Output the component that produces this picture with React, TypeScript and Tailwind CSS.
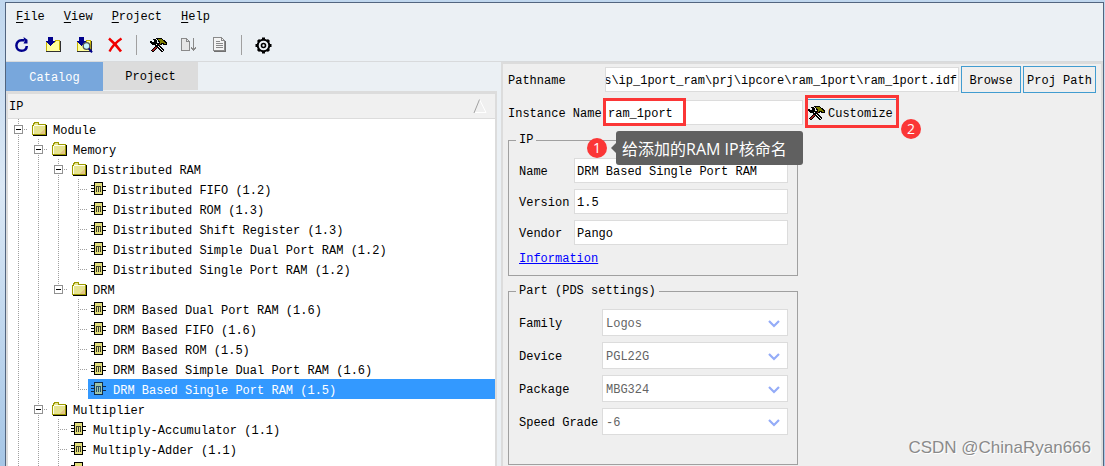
import { useEffect, useRef } from "react";
import type { ReactNode } from "react";

type Cell = "line" | "blank" | "tee" | "end" | "box" | "boxEnd";

interface TreeRow {
  cells: Cell[];
  label: string;
  selected?: boolean;
}

const ROWS: TreeRow[] = [
  { cells: ["box"], label: "Module" },
  { cells: ["line", "box"], label: "Memory" },
  { cells: ["line", "line", "box"], label: "Distributed RAM" },
  { cells: ["line", "line", "line", "tee"], label: "Distributed FIFO (1.2)" },
  { cells: ["line", "line", "line", "tee"], label: "Distributed ROM (1.3)" },
  { cells: ["line", "line", "line", "tee"], label: "Distributed Shift Register (1.3)" },
  { cells: ["line", "line", "line", "tee"], label: "Distributed Simple Dual Port RAM (1.2)" },
  { cells: ["line", "line", "line", "end"], label: "Distributed Single Port RAM (1.2)" },
  { cells: ["line", "line", "boxEnd"], label: "DRM" },
  { cells: ["line", "line", "blank", "tee"], label: "DRM Based Dual Port RAM (1.6)" },
  { cells: ["line", "line", "blank", "tee"], label: "DRM Based FIFO (1.6)" },
  { cells: ["line", "line", "blank", "tee"], label: "DRM Based ROM (1.5)" },
  { cells: ["line", "line", "blank", "tee"], label: "DRM Based Simple Dual Port RAM (1.6)" },
  { cells: ["line", "line", "blank", "end"], label: "DRM Based Single Port RAM (1.5)", selected: true },
  { cells: ["line", "box"], label: "Multiplier" },
  { cells: ["line", "line", "tee"], label: "Multiply-Accumulator (1.1)" },
  { cells: ["line", "line", "tee"], label: "Multiply-Adder (1.1)" },
  { cells: ["line", "line", "tee"], label: "" },
];

const PATHNAME = "ds\\ip_1port_ram\\prj\\ipcore\\ram_1port\\ram_1port.idf";

const PART_FIELDS = [
  { id: "family", label: "Family", value: "Logos" },
  { id: "device", label: "Device", value: "PGL22G" },
  { id: "package", label: "Package", value: "MBG324" },
  { id: "speed", label: "Speed Grade", value: "-6" },
];

const IP_FIELDS = [
  { id: "name", label: "Name", value: "DRM Based Single Port RAM" },
  { id: "version", label: "Version", value: "1.5" },
  { id: "vendor", label: "Vendor", value: "Pango" },
];

function TreeCell({ type }: { type: Cell }) {
  const isBox = type === "box" || type === "boxEnd";
  const stops = type === "end" || type === "boxEnd";
  return (
    <svg width="20" height="20" className="shrink-0" shapeRendering="crispEdges" fill="none">
      {type !== "blank" && (
        <path d={stops ? "M10.5 0V11" : "M10.5 0V20"} stroke="#a0a0a0" strokeDasharray="1 1" />
      )}
      {type !== "blank" && type !== "line" && (
        <path d="M10 10.5H20" stroke="#a0a0a0" strokeDasharray="1 1" />
      )}
      {isBox && (
        <>
          <rect x="6.5" y="6.5" width="8" height="8" fill="#fff" stroke="#919191" />
          <path d="M8 10.5H13" stroke="#000" />
        </>
      )}
    </svg>
  );
}

function FolderIcon() {
  return (
    <svg width="16" height="16" viewBox="0 0 16 16" shapeRendering="crispEdges">
      <path d="M1 14V4L3 2H7L8 4H14V14Z" fill="#e6e391" />
      <path d="M7 14L14 7V14Z" fill="#e3c583" />
      <path d="M1.5 14V4.5H2.5V2.5H3.5V1.5H7.5V3.5H14.5V5" fill="none" stroke="#9c9a00" />
      <path d="M3 4.5H14M2.5 5V13" stroke="#fffff0" />
      <path d="M2 14.5H15.5V4" fill="none" stroke="#000" />
      <path d="M2 13.5H14.5V5" fill="none" stroke="#9c9a00" />
    </svg>
  );
}

function ChipIcon({ selected }: { selected?: boolean }) {
  return (
    <svg width="16" height="16" viewBox="0 0 16 16" shapeRendering="crispEdges" fill="none">
      <path d="M0 4.5H4M0 7.5H4M0 10.5H4M12 5.5H15M12 9.5H15" stroke={selected ? "#0d2c4c" : "#000"} />
      <rect x="3.5" y="1.5" width="8" height="12" fill={selected ? "#9fc4a4" : "#e3df7b"} stroke={selected ? "#0d2c4c" : "#000"} />
      <path d="M5.5 11V5.5H9.5V11M7.5 6V11" stroke={selected ? "#27506f" : "#404030"} />
    </svg>
  );
}

function RefreshIcon() {
  return (
    <svg width="16" height="16" viewBox="0 0 16 16" fill="none">
      <path d="M10 3.2H7.5C4.4 3.4 2.4 5.8 2.4 8.6C2.4 11.8 4.6 13.8 7.5 13.8C10.4 13.8 12.6 12 12.8 9" stroke="#00008c" strokeWidth="2.5" />
      <path d="M9.5 0L13.5 2.8V6.5H9.5L10.5 4.5Z" fill="#00008c" />
    </svg>
  );
}

function ImportIcon({ search }: { search?: boolean }) {
  return (
    <svg width="17" height="16" viewBox="0 0 17 16" shapeRendering="crispEdges">
      <path d="M1 5H9L11 3H15V14H1Z" fill="#ffff9c" />
      <path d="M1.5 5V14M1 5.5H9.5V4.5H10.5V3.5H14.5V13" fill="none" stroke="#c8b400" />
      <path d="M1 14.5H15.5V4" fill="none" stroke="#303030" />
      <path d="M3 0H8V4H10L5.5 9L1 4H3Z" fill="#00008c" />
      {search && (
        <g shapeRendering="auto">
          <circle cx="10.5" cy="9" r="3.3" fill="#c8f4ff" stroke="#555" strokeWidth="1.3" />
          <path d="M12.8 11.5L16 15.3" stroke="#00008c" strokeWidth="2" />
        </g>
      )}
    </svg>
  );
}

function DeleteIcon() {
  return (
    <svg width="15" height="16" viewBox="0 0 15 16" fill="none" stroke="#f00000">
      <path d="M1 1.5C4 4 9 9 13 14.5" strokeWidth="2.6" />
      <path d="M13.5 1.5C9 4.5 4 9.5 1.5 14.5" strokeWidth="2.4" />
    </svg>
  );
}

function ToolsIcon() {
  return (
    <svg width="17" height="16" viewBox="0 0 17 16" fill="none" shapeRendering="crispEdges">
      <path d="M2 14.5L10 6.5" stroke="#000" strokeWidth="3" />
      <path d="M2.5 14L10 6.5" stroke="#a02020" strokeWidth="1.2" />
      <path d="M7 1.5H11L14 3.5L16 5.5V7.5H14.5L12.5 6.5L10.5 7.5L9 6V4.5Z" fill="#7f7f00" stroke="#000" />
      <path d="M5 6L13.5 14.5" stroke="#000" strokeWidth="3" />
      <path d="M6 7L13 14" stroke="#fff" strokeWidth="1" strokeDasharray="2 1" />
      <path d="M0 4H2V5H4V3H3V2H5L7 4V7L5 8H2L0 6Z" fill="#000" />
    </svg>
  );
}

function DocArrowIcon() {
  return (
    <svg width="16" height="16" viewBox="0 0 16 16" fill="#e6e6e6" stroke="#8a8a8a" shapeRendering="crispEdges">
      <path d="M0.5 1.5H5.5L8.5 4.5V13.5H0.5Z" />
      <path d="M5.5 1.5V4.5H8.5" fill="none" />
      <path d="M12.5 1V14M10.5 10V11.5H14.5V10M11 12.5H14" fill="none" />
    </svg>
  );
}

function DocIcon() {
  return (
    <svg width="14" height="16" viewBox="0 0 14 16" fill="none" stroke="#8a8a8a" shapeRendering="crispEdges">
      <path d="M0.5 0.5H8.5L11.5 3.5V13.5H0.5Z" fill="#f4f4f4" />
      <path d="M8.5 0.5V3.5H11.5M3 4.5H7M3 6.5H10M3 8.5H10M3 10.5H10" />
      <path d="M1 14.5H12.5V4" stroke="#707070" />
    </svg>
  );
}

function GearIcon() {
  return (
    <svg width="17" height="17" viewBox="0 0 17 17" fill="none" stroke="#000">
      <circle cx="8.5" cy="8.5" r="5.8" strokeWidth="2" />
      <circle cx="8.5" cy="8.5" r="2" strokeWidth="1.6" />
      <path
        d="M8.5 0.5V3M8.5 14V16.5M0.5 8.5H3M14 8.5H16.5M3 3L4.4 4.4M12.6 12.6L14 14M3 14L4.4 12.6M12.6 4.4L14 3"
        strokeWidth="3"
      />
    </svg>
  );
}

function MenuItem({ label }: { label: string }) {
  return (
    <button>
      <span className="underline underline-offset-2">{label[0]}</span>
      {label.slice(1)}
    </button>
  );
}

function ToolButton({ label, children }: { label: string; children: ReactNode }) {
  return (
    <button aria-label={label} className="flex w-6 h-6 items-center justify-center">
      {children}
    </button>
  );
}

function Separator() {
  return <div className="w-px h-5 mx-[2px] bg-[#a0a0a0]" />;
}

function Badge({ children, className }: { children: ReactNode; className: string }) {
  return (
    <span
      className={`absolute flex w-5 h-5 items-center justify-center rounded-full bg-[#fb3636] text-white text-sm font-['Open_Sans',sans-serif] ${className}`}
    >
      {children}
    </span>
  );
}

function CatalogPanel() {
  return (
    <section className="flex flex-col min-w-0 min-h-0">
      <div className="flex h-[29px] items-start">
        <button className="w-[97px] h-[29px] pt-[2px] bg-[#78a7dc] text-white">Catalog</button>
        <button className="w-[95px] h-7 pt-[2px] bg-[#dcdcdc]">Project</button>
      </div>
      <div className="flex-1 min-h-0 overflow-hidden border-x-2 border-t-[3px] border-[#dcdcdc] bg-white">
        <div className="flex h-[25px] items-center justify-between pl-px pr-2 bg-[#f0f0f0] border-b border-[#dcdcdc]">
          <span className="pt-[2px]">IP</span>
          <svg width="14" height="15" fill="none">
            <path d="M6.5 0.5L13 13.5H1" stroke="#fff" />
            <path d="M1 14L6.5 0.5" stroke="#a0a0a0" />
          </svg>
        </div>
        <ul>
          {ROWS.map((row, index) => {
            const last = row.cells[row.cells.length - 1];
            const isFolder = last === "box" || last === "boxEnd";
            return (
              <li key={index} className="flex h-5">
                {row.cells.map((cell, i) => (
                  <TreeCell key={i} type={cell} />
                ))}
                <div
                  className={`flex flex-1 items-center gap-[6px] pl-[3px] whitespace-nowrap ${
                    row.selected ? "bg-[#3399ff] text-white" : ""
                  }`}
                >
                  {isFolder ? <FolderIcon /> : <ChipIcon selected={row.selected} />}
                  <span className="pt-1">{row.label}</span>
                </div>
              </li>
            );
          })}
        </ul>
      </div>
    </section>
  );
}

function DetailPanel() {
  const pathRef = useRef<HTMLInputElement>(null);

  // keep the end of a long path in view
  useEffect(() => {
    if (pathRef.current) pathRef.current.scrollLeft = pathRef.current.scrollWidth;
  }, []);

  return (
    <section className="min-w-0 overflow-hidden border-l-2 border-t-2 border-r-2 border-[#dcdcdc] bg-[#efefef] px-[5px] pt-[2px]">
      <div className="flex items-center gap-[2px]">
        <label htmlFor="pathname" className="w-[95px] shrink-0 pt-[2px]">
          Pathname
        </label>
        <input
          id="pathname"
          ref={pathRef}
          defaultValue={PATHNAME}
          className="flex-1 min-w-0 h-[25px] pt-[2px] pr-px bg-white border border-[#dcdcdc] text-right"
        />
        <button className="w-[60px] h-[27px] pt-[2px] border border-[#419cd0]">Browse</button>
        <button className="w-[73px] h-[27px] pt-[2px] border border-[#419cd0] whitespace-nowrap">Proj Path</button>
      </div>

      <div className="flex items-center mt-[6px]">
        <label htmlFor="instance" className="w-[97px] shrink-0 pt-[2px] whitespace-nowrap">
          Instance Name
        </label>
        <div className="relative w-[198px] mr-[5px]">
          <input
            id="instance"
            defaultValue="ram_1port"
            className="block w-full h-[25px] pt-[2px] px-[2px] bg-white border border-[#dcdcdc]"
          />
          <div className="absolute -left-[2px] -top-[2px] w-[83px] h-7 border-[3px] border-[#fb3636]" />
          <Badge className="-left-[18px] top-[38px]">1</Badge>
          <div className="absolute left-[11px] top-[31px] flex h-[34px] w-[187px] items-center rounded-[3px] bg-[#606060] pl-[6px] pt-[2px] text-white text-[16px] whitespace-nowrap font-['Open_Sans','Noto_Sans_CJK_SC',sans-serif]">
            <span className="absolute -left-[5px] top-[12px] border-y-[5px] border-r-[5px] border-y-transparent border-r-[#606060]" />
            给添加的RAM IP核命名
          </div>
        </div>
        <div className="relative">
          <button className="flex w-[88px] h-[27px] items-center gap-[3px] border-t border-[#419cd0]">
            <ToolsIcon />
            <span className="pt-[2px]">Customize</span>
          </button>
          <div className="absolute -left-[3px] -right-[3px] -top-1 h-[33px] border-[3px] border-[#fb3636]" />
          <Badge className="left-[93px] top-5">2</Badge>
        </div>
      </div>

      <fieldset className="max-w-[290px] mt-[6px] border border-[#a0a0a0] pl-[10px] pr-[9px] pb-2">
        <legend className="-ml-[3px] px-[3px]">IP</legend>
        <div className="flex flex-col gap-[6px] pt-[10px]">
          {IP_FIELDS.map((field) => (
            <div key={field.id} className="flex items-center">
              <label htmlFor={field.id} className="w-[55px] shrink-0 pt-[2px]">
                {field.label}
              </label>
              <input
                id={field.id}
                readOnly
                value={field.value}
                className="flex-1 min-w-0 h-[25px] pt-[2px] px-[2px] bg-white border border-[#dcdcdc]"
              />
            </div>
          ))}
          <a href="#information" className="self-start text-[#0000ff] underline">
            Information
          </a>
        </div>
      </fieldset>

      <fieldset className="max-w-[290px] mt-[7px] border border-[#a0a0a0] pl-[10px] pr-[9px] pb-[29px]">
        <legend className="-ml-[3px] px-[3px]">Part (PDS settings)</legend>
        <div className="flex flex-col gap-[6px] pt-[10px]">
          {PART_FIELDS.map((field) => (
            <div key={field.id} className="flex items-center">
              <label htmlFor={field.id} className="w-[83px] shrink-0 pt-[2px]">
                {field.label}
              </label>
              <div className="relative flex-1">
                <select
                  id={field.id}
                  disabled
                  className="block w-full h-[27px] appearance-none pt-[2px] px-[3px] bg-white border border-[#dcdcdc] text-[#646464] disabled:opacity-100"
                >
                  <option>{field.value}</option>
                </select>
                <svg width="12" height="8" fill="none" className="absolute right-2 top-[11px] pointer-events-none">
                  <path d="M1 1L6 6L11 1" stroke="#94acf8" strokeWidth="2.2" />
                </svg>
              </div>
            </div>
          ))}
        </div>
      </fieldset>
    </section>
  );
}

export default function App() {
  return (
    <div className="relative flex h-screen overflow-hidden bg-linear-to-b from-[#c0d7ee] via-[#dbe8f5] via-40% to-[#a6c6e6] pl-[5px] pr-px pt-[2px] font-['Liberation_Mono',monospace] text-[12px] leading-4 text-black">
      <div className="flex flex-1 min-w-0 flex-col border-x border-t border-[#52657f] bg-[#ebf0f4]">
        <nav className="flex h-[26px] items-center gap-[19px] pt-[2px] pl-[10px]">
          <MenuItem label="File" />
          <MenuItem label="View" />
          <MenuItem label="Project" />
          <MenuItem label="Help" />
        </nav>
        <div className="flex h-8 items-center gap-[7px] pl-[4px]">
          <ToolButton label="Refresh"><RefreshIcon /></ToolButton>
          <ToolButton label="Import"><ImportIcon /></ToolButton>
          <ToolButton label="Find"><ImportIcon search /></ToolButton>
          <ToolButton label="Delete"><DeleteIcon /></ToolButton>
          <Separator />
          <ToolButton label="Customize IP"><ToolsIcon /></ToolButton>
          <ToolButton label="Update"><DocArrowIcon /></ToolButton>
          <ToolButton label="Report"><DocIcon /></ToolButton>
          <Separator />
          <ToolButton label="Settings"><GearIcon /></ToolButton>
        </div>
        <main className="grid flex-1 min-h-0 grid-cols-[491fr_602fr] grid-rows-[minmax(0,1fr)] gap-x-1 border-t border-[#d8dadc]">
          <CatalogPanel />
          <DetailPanel />
        </main>
      </div>
      <span className="absolute right-[14px] bottom-[6px] text-[17px] leading-6 text-[#8a8a8a] font-['Liberation_Sans',sans-serif] [text-shadow:1px_1px_0_#fff]">
        CSDN @ChinaRyan666
      </span>
    </div>
  );
}
